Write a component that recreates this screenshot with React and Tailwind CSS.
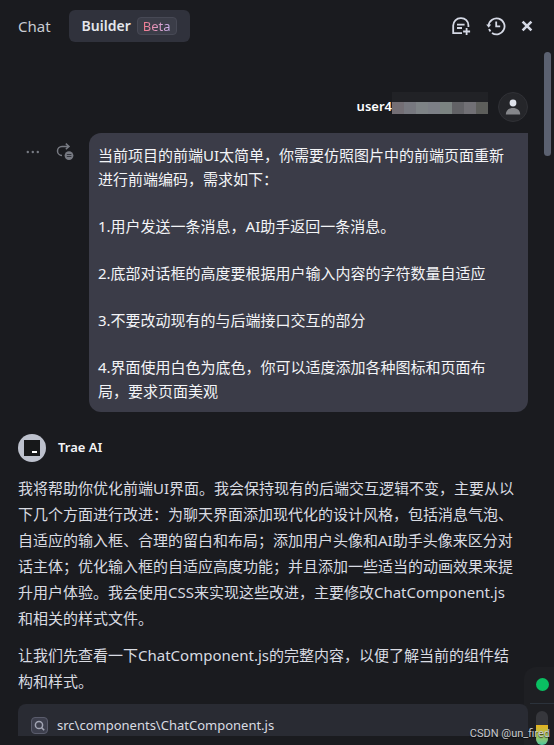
import React from "react";

const requirements = [
  ["当前项目的前端UI太简单，你需要仿照图片中的前端页面重新", "进行前端编码，需求如下："],
  ["1.用户发送一条消息，AI助手返回一条消息。"],
  ["2.底部对话框的高度要根据用户输入内容的字符数量自适应"],
  ["3.不要改动现有的与后端接口交互的部分"],
  ["4.界面使用白色为底色，你可以适度添加各种图标和页面布", "局，要求页面美观"],
];

const answer = [
  [
    "我将帮助你优化前端UI界面。我会保持现有的后端交互逻辑不变，主要从以",
    "下几个方面进行改进：为聊天界面添加现代化的设计风格，包括消息气泡、",
    "自适应的输入框、合理的留白和布局；添加用户头像和AI助手头像来区分对",
    "话主体；优化输入框的自适应高度功能；并且添加一些适当的动画效果来提",
    "升用户体验。我会使用CSS来实现这些改进，主要修改ChatComponent.js",
    "和相关的样式文件。",
  ],
  ["让我们先查看一下ChatComponent.js的完整内容，以便了解当前的组件结", "构和样式。"],
];

function Lines({ lines }) {
  return lines.map((line) => (
    <span key={line} className="block whitespace-nowrap">
      {line}
    </span>
  ));
}

function NewChatIcon() {
  return (
    <svg width="20" height="20" viewBox="0 0 20 20" fill="none" stroke="currentColor" strokeWidth="1.8">
      <path d="M11 17.2H2.2V9.5a7.4 7.4 0 0 1 7.4-7.4h.6a7.2 7.2 0 0 1 7.2 7.2v1.6" />
      <path d="M6 8.6h7.6M6 12h5M15.6 12v7M12.1 15.5h7" />
    </svg>
  );
}

function HistoryIcon() {
  return (
    <svg width="20" height="20" viewBox="0 0 20 20" fill="none" stroke="currentColor" strokeWidth="1.8">
      <path d="M2.6 9.4A8 8 0 1 1 6 16.9" />
      <path d="M10.2 5.6v4.8h4" />
      <path d="M.2 8.4h5L2.7 11.8Z" fill="currentColor" stroke="none" />
      <path d="M3.1 13a8 8 0 0 0 1.4 2.4" />
    </svg>
  );
}

function CloseIcon() {
  return (
    <svg width="12" height="12" viewBox="0 0 12 12" fill="none" stroke="currentColor" strokeWidth="2.6">
      <path d="m1.6 1.6 8.8 8.8M10.4 1.6l-8.8 8.8" />
    </svg>
  );
}

function RevertIcon() {
  return (
    <svg width="18" height="18" viewBox="0 0 18 18" fill="none" stroke="currentColor" strokeWidth="1.5">
      <path d="M6 12.4a4.5 4.5 0 0 1 0-9H13M9.8.6l3.2 2.8-3.2 2.8" />
      <circle cx="13" cy="12.6" r="4.4" fill="#777a82" stroke="none" />
      <path d="M10.8 11.5h4.6M10.8 13.5h4.6" stroke="#34363e" strokeWidth="1" />
    </svg>
  );
}

function Censored() {
  return (
    <div aria-hidden="true" className="flex h-[22px] w-24 flex-col">
      <div className="h-[10px] bg-[#212226]" />
      <div className="grid h-3 grid-cols-8">
        <span className="bg-[#736e74]" />
        <span className="bg-[#77787f]" />
        <span className="bg-[#7e8386]" />
        <span className="bg-[#7c7f86]" />
        <span className="bg-[#7b8381]" />
        <span className="bg-[#626266]" />
        <span className="bg-[#717075]" />
        <span className="bg-[#5d5e5b]" />
      </div>
    </div>
  );
}

export default function App() {
  return (
    <div
      lang="zh-CN"
      className="relative flex h-screen flex-col overflow-hidden bg-[#1a1b1f] font-['Noto_Sans','Noto_Sans_CJK_SC',sans-serif] text-[15px] text-[#d9dbe2]"
    >
      <header className="flex h-[52px] shrink-0 items-center pr-[21px] pl-[18px]">
        <nav className="flex items-center gap-[18px]">
          <button className="text-[15px] text-[#c9cbd2]">Chat</button>
          <button className="flex h-8 items-center gap-1.5 rounded-md bg-[#30323c] px-[13px] text-sm font-semibold text-[#e4e6ec]">
            Builder
            <span className="flex h-[18px] items-center rounded border border-[#474955] bg-[#3b3d48] px-[5px] text-[13px] font-normal">
              <span className="bg-linear-to-r from-[#f0788c] to-[#c9b4f4] bg-clip-text text-transparent">Beta</span>
            </span>
          </button>
        </nav>
        <div className="ml-auto flex items-center gap-[15px] text-[#d5d9e5]">
          <button aria-label="New chat"><NewChatIcon /></button>
          <button aria-label="History"><HistoryIcon /></button>
          <button aria-label="Close"><CloseIcon /></button>
        </div>
      </header>

      <main className="relative z-10 flex min-h-0 flex-1 flex-col overflow-hidden pr-[26px] pb-[9px] pl-[18px]">
        <section className="shrink-0 pt-10">
          <div className="flex h-[30px] items-center justify-end">
            <span className="text-[13px] font-semibold text-white">user4</span>
            <div className="pb-2"><Censored /></div>
            <span className="ml-[10px] flex size-[30px] items-center justify-center rounded-full border border-[#303136] bg-[#25262a]">
              <svg width="16" height="16" viewBox="0 0 16 16">
                <circle cx="8" cy="4" r="3.4" fill="#dfe2eb" />
                <path d="M.8 15.5c0-4.2 3-6.5 7.2-6.5s7.2 2.3 7.2 6.5Z" fill="#85868a" />
              </svg>
            </span>
          </div>
          <div className="mt-[11px] flex">
            <div className="flex h-[38px] w-[71px] shrink-0 items-center gap-4 pl-2 text-[#777a82]">
              <button aria-label="More">
                <svg width="14" height="4" viewBox="0 0 14 4" fill="currentColor">
                  <circle cx="1.8" cy="2" r="1.2" />
                  <circle cx="6.8" cy="2" r="1.2" />
                  <circle cx="11.8" cy="2" r="1.2" />
                </svg>
              </button>
              <button aria-label="Revert"><RevertIcon /></button>
            </div>
            <div className="flex min-w-0 flex-1 flex-col gap-[23px] rounded-xl rounded-tr-none bg-[#3b3c48] px-[9px] pt-[10px] pb-[9px] leading-6 text-[#f3f4f7]">
              {requirements.map((lines) => (
                <p key={lines[0]}><Lines lines={lines} /></p>
              ))}
            </div>
          </div>
        </section>

        <section className="flex min-h-0 flex-1 flex-col pt-[22px]">
          <div className="flex shrink-0 items-center gap-3">
            <span className="flex size-7 items-center justify-center rounded-full bg-[#bdc1cd]">
              <svg width="16" height="16" viewBox="0 0 16 16">
                <path d="M0 0h16v16H0Z" fill="#17181a" />
                <path d="M8 11h5v2H8Z" fill="#fff" />
              </svg>
            </span>
            <h2 className="text-[13px] font-semibold text-[#f3f4f7]">Trae AI</h2>
          </div>
          <div className="mt-[13px] flex shrink-0 flex-col gap-[11px] leading-[26px]">
            {answer.map((lines) => (
              <p key={lines[0]}><Lines lines={lines} /></p>
            ))}
          </div>
          <div className="mt-[10px] flex min-h-0 flex-1 items-start gap-[9px] overflow-hidden rounded-t-lg bg-[#292b33] px-[13px] pt-[9px]">
            <span className="mt-1 flex size-[17px] shrink-0 items-center justify-center rounded border border-[#5a5c6c] bg-[#3d3f4d]">
              <svg width="11" height="11" viewBox="0 0 11 11" fill="none" stroke="#a3a6b5" strokeWidth="1.5">
                <circle cx="5" cy="5" r="3.6" />
                <path d="m7.6 7.6 2.6 2.6" />
              </svg>
            </span>
            <span className="text-[13px] leading-6">src\components\ChatComponent.js</span>
          </div>
        </section>
      </main>

      <div className="absolute top-[52px] right-[3px] h-[104px] w-[7px] rounded-full bg-[#5b6170]" />

      <aside className="absolute right-0 bottom-0 flex h-[78px] w-[30px] flex-col items-center rounded-tl-xl bg-[#1e1f23] pl-[6px]">
        <span className="mt-[11px] size-[13px] shrink-0 rounded-full bg-[#0abf62]" />
        <span className="mt-3 h-px w-full shrink-0 bg-[#2b323b]" />
        <span className="mt-[7px] flex min-h-0 w-3 flex-1 flex-col overflow-hidden rounded-full bg-[#36373c]">
          <span className="mt-[14px] flex-1 bg-linear-to-b from-[#e6b21c] via-[#a9c24c] to-[#45c7a0]" />
        </span>
      </aside>
      <span className="absolute right-1 bottom-[3px] z-20 font-[Roboto,sans-serif] text-[11px] leading-4 whitespace-nowrap text-[#c9cacd] [text-shadow:0_1px_1px_rgba(0,0,0,0.7)]">
        CSDN @un_fired
      </span>
    </div>
  );
}
